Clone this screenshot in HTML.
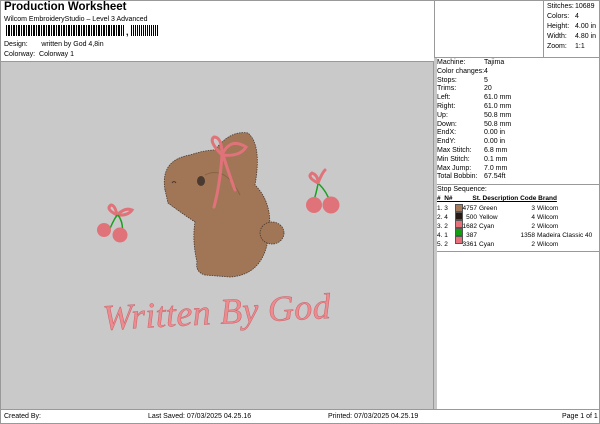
<html><head><style>
body{margin:0;width:600px;height:424px;background:#fff;font-family:"Liberation Sans",sans-serif;color:#000;position:relative;overflow:hidden}
.a{position:absolute;font-size:7px;white-space:nowrap}
.t{position:absolute;left:0;top:0;width:598px;height:422px;border:1px solid #999}
.sw{display:inline-block;width:6px;height:6px;border:1px solid #555;vertical-align:-1px}
</style></head><body>
<div class="t"></div>
<div class="a" style="left:4px;top:1px;font-size:11.5px;font-weight:bold">Production Worksheet</div>
<div class="a" style="left:4px;top:16px">Wilcom EmbroideryStudio – Level 3 Advanced</div>
<div style="position:absolute;left:6px;top:25px;width:118px;height:11px;background:repeating-linear-gradient(90deg,#000 0 1px,#fff 1px 2px,#000 2px 3px,#000 3px 4px,#fff 4px 5px)"></div>
<div class="a" style="left:126px;top:27px;font-size:9px;font-weight:bold">,</div>
<div style="position:absolute;left:131px;top:25px;width:27px;height:11px;background:repeating-linear-gradient(90deg,#000 0 1px,#fff 1px 2px,#000 2px 3px,#fff 3px 4px)"></div>
<div class="a" style="left:4px;top:41px">Design:&nbsp;&nbsp;&nbsp;&nbsp;&nbsp;&nbsp;&nbsp;written by God 4,8in</div>
<div class="a" style="left:4px;top:51px">Colorway:&nbsp;&nbsp;Colorway 1</div>
<div style="position:absolute;left:1px;top:61px;width:432px;height:348px;background:#c9c9c9;border-top:1px solid #999;border-right:1px solid #999"></div>
<div style="position:absolute;left:434px;top:0;width:1px;height:409px;background:#999"></div>
<div style="position:absolute;left:543px;top:0;width:1px;height:57px;background:#999"></div>
<div style="position:absolute;left:434px;top:57px;width:166px;height:1px;background:#999"></div>
<div style="position:absolute;left:434px;top:184px;width:166px;height:1px;background:#999"></div>
<div style="position:absolute;left:434px;top:251px;width:166px;height:1px;background:#999"></div>
<div style="position:absolute;left:434px;top:58px;width:3px;height:351px;background:#c8c8c8"></div>
<div class="a" style="left:547px;top:2px;line-height:10px">Stitches:<br>Colors:<br>Height:<br>Width:<br>Zoom:</div>
<div class="a" style="left:575px;top:2px;line-height:10px">10689<br>4<br>4.00 in<br>4.80 in<br>1:1</div>
<div class="a" style="left:437px;top:59px;line-height:8.8px">Machine:<br>Color changes:<br>Stops:<br>Trims:<br>Left:<br>Right:<br>Up:<br>Down:<br>EndX:<br>EndY:<br>Max Stitch:<br>Min Stitch:<br>Max Jump:<br>Total Bobbin:</div>
<div class="a" style="left:484px;top:59px;line-height:8.8px">Tajima<br>4<br>5<br>20<br>61.0 mm<br>61.0 mm<br>50.8 mm<br>50.8 mm<br>0.00 in<br>0.00 in<br>6.8 mm<br>0.1 mm<br>7.0 mm<br>67.54ft</div>
<div class="a" style="left:437px;top:186px">Stop Sequence:</div>
<div class="a" style="left:437px;top:195px;font-weight:bold;text-decoration:underline;font-size:6.5px">#&nbsp;&nbsp;N#&nbsp;&nbsp;&nbsp;&nbsp;&nbsp;&nbsp;&nbsp;&nbsp;&nbsp;&nbsp;&nbsp;St.&nbsp;Description&nbsp;Code&nbsp;Brand</div>
<div class="a" style="left:437px;top:204px;line-height:9px;font-size:6.5px">1. 3<br>2. 4<br>3. 2<br>4. 1<br>5. 2</div>
<div class="a" style="left:455px;top:204px;line-height:9px"><span class="sw" style="background:#a87a5c"></span><br><span class="sw" style="background:#2a1a14"></span><br><span class="sw" style="background:#e8707a"></span><br><span class="sw" style="background:#10a010"></span><br><span class="sw" style="background:#e8707a"></span></div>
<div class="a" style="left:462px;top:204px;line-height:9px;text-align:right;width:15px;font-size:6.5px">4757<br>500<br>1682<br>387<br>3361</div>
<div class="a" style="left:479px;top:204px;line-height:9px;font-size:6.5px">Green<br>Yellow<br>Cyan<br><br>Cyan</div>
<div class="a" style="left:506px;top:204px;line-height:9px;text-align:right;width:29px;font-size:6.5px">3<br>4<br>2<br>1358<br>2</div>
<div class="a" style="left:537px;top:204px;line-height:9px;font-size:6.5px">Wilcom<br>Wilcom<br>Wilcom<br>Madeira Classic 40<br>Wilcom</div>
<div style="position:absolute;left:0;top:409px;width:600px;height:1px;background:#999"></div>
<div class="a" style="left:4px;top:413px">Created By:</div>
<div class="a" style="left:148px;top:413px">Last Saved: 07/03/2025 04.25.16</div>
<div class="a" style="left:328px;top:413px">Printed: 07/03/2025 04.25.19</div>
<div class="a" style="left:562px;top:413px">Page 1 of 1</div>
<svg style="position:absolute;left:0;top:0" width="434" height="409">
<g fill="#a07656" stroke="#4a3a30" stroke-width="0.8" stroke-dasharray="1.5 1">
<path d="M165 190 Q160 160 190 155 Q205 150 215 150 Q230 130 248 133 Q262 145 255 185 Q275 205 268 240 Q262 275 230 277 L205 275 Q195 272 197 262 Q192 240 195 222 Q180 212 168 203 Z"/>
<ellipse cx="272" cy="233" rx="12" ry="11"/>
</g>
<path d="M205 175 Q225 165 240 195" stroke="#8a6246" fill="none"/>
<ellipse cx="201" cy="181" rx="4" ry="5" fill="#4a3a30"/>
<path d="M172 183 q2 -3 4 0" stroke="#4a3a30" fill="none"/>
<g stroke="#e0737a" stroke-width="3" fill="none" stroke-linecap="round">
<path d="M222 155 q-14 -14 -8 -18 q8 0 8 18 q8 -18 24 -8 q-6 10 -24 8"/>
<path d="M222 155 q-2 30 -8 52 M223 155 q8 25 12 35"/>
<path d="M117 215 q-12 -6 -6 -10 q4 0 6 10 q8 -8 15 -5 q-4 6 -15 5"/>
<path d="M318 183 q-12 -6 -6 -10 q6 2 6 10 q4 -10 7 -13"/>
</g>
<g stroke="#1aa020" stroke-width="1.5" fill="none"><path d="M117 215 q-5 8 -8 16 M118 215 q6 8 4 20 M318 184 q-2 10 -4 16 M319 184 q8 8 11 18"/></g>
<g fill="#e0737a"><circle cx="104" cy="230" r="7"/><circle cx="120" cy="235" r="7.5"/><circle cx="314" cy="205" r="8"/><circle cx="331" cy="205" r="8.5"/></g>
<text x="103" y="324" font-family="Liberation Serif,serif" font-style="italic" font-size="36" fill="#ec8c90" stroke="#c86068" stroke-width="0.5" textLength="228" transform="rotate(-3 215 320)">Written By God</text>
</svg>
</body></html>
